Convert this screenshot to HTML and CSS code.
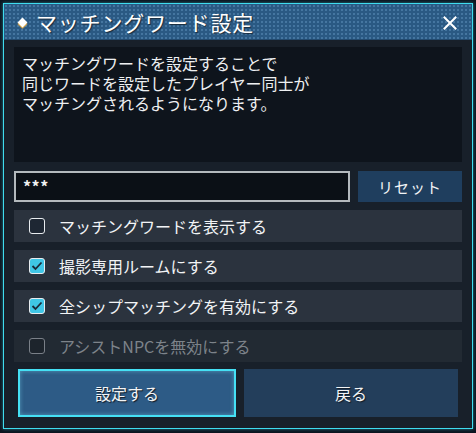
FILE: index.html
```html
<!DOCTYPE html>
<html lang="ja">
<head>
<meta charset="utf-8">
<link rel="stylesheet" href="styles.css">
</head>
<body>
<div class="dialog">
  <div class="titlebar">
    <span class="diamond"></span>
    <span class="title">マッチングワード設定</span>
    <svg class="close" width="14" height="14" viewBox="0 0 14 14"><path d="M1.5 1.5 L12.5 12.5 M12.5 1.5 L1.5 12.5" stroke="#fff" stroke-width="2" stroke-linecap="square"/></svg>
  </div>
  <div class="content">
    <div class="desc">マッチングワードを設定することで<br>同じワードを設定したプレイヤー同士が<br>マッチングされるようになります。</div>
    <div class="inputrow">
      <div class="input">***</div>
      <div class="reset">リセット</div>
    </div>
    <div class="row"><span class="cb"></span><span class="label">マッチングワードを表示する</span></div>
    <div class="row"><span class="cb checked"><svg width="12" height="10" viewBox="0 0 12 10"><path d="M1.5 5 L4.5 8 L10.5 1.5" fill="none" stroke="#1b2a3a" stroke-width="1.8"/></svg></span><span class="label">撮影専用ルームにする</span></div>
    <div class="row"><span class="cb checked"><svg width="12" height="10" viewBox="0 0 12 10"><path d="M1.5 5 L4.5 8 L10.5 1.5" fill="none" stroke="#1b2a3a" stroke-width="1.8"/></svg></span><span class="label">全シップマッチングを有効にする</span></div>
    <div class="row disabled"><span class="cb"></span><span class="label">アシストNPCを無効にする</span></div>
    <div class="buttons">
      <div class="btn primary">設定する</div>
      <div class="btn secondary">戻る</div>
    </div>
  </div>
</div>
</body>
</html>
```
FILE: styles.css
```css
html, body {
  margin: 0;
  padding: 0;
  background: #0c1520;
  font-family: "Noto Sans CJK JP", "Noto Sans", sans-serif;
  color: #f2f4f6;
}
body {
  width: 476px;
  height: 433px;
  overflow: hidden;
}
.dialog {
  margin: 3px;
  width: 468px;
  height: 424px;
  border: 1px solid #3fdcef;
  background: #18202a;
  display: flex;
  flex-direction: column;
  box-shadow: 0 0 3px rgba(63, 220, 239, 0.5);
}
.titlebar {
  height: 36px;
  display: flex;
  align-items: center;
  padding: 0 15px 0 13px;
  background-color: #2a5983;
  background-image: radial-gradient(circle, rgba(120,170,215,0.35) 0.9px, transparent 1.3px);
  background-size: 4px 4px;
  box-shadow: inset 0 -1px 0 #234b70;
}
.diamond {
  width: 7px;
  height: 7px;
  background: #fff;
  transform: rotate(45deg);
  box-shadow: 1px 1px 1px #f0b040;
  margin: 0 10px 0 2px;
}
.title {
  font-size: 21px;
  letter-spacing: 0.8px;
  color: #fff;
  text-shadow: 1px 1px 1px #1a2a3a;
  flex: 1;
  line-height: 36px;
}
.close {
  margin-top: 1px;
}
.content {
  flex: 1;
  padding: 7px 10px 10px 10px;
  display: flex;
  flex-direction: column;
}
.desc {
  height: 115px;
  background: #0e141c;
  box-sizing: border-box;
  padding: 6px 8px;
  font-size: 16px;
  line-height: 20px;
  color: #eef0f2;
}
.inputrow {
  display: flex;
  gap: 8px;
  margin-top: 9px;
  height: 31px;
}
.input {
  flex: 1;
  box-sizing: border-box;
  border: 2px solid #b3b9bd;
  background: #0b1016;
  font-size: 16px;
  line-height: 27px;
  padding-left: 7px;
  color: #f0f0f0;
  font-weight: bold;
  letter-spacing: 0.5px;
}
.reset {
  width: 104px;
  background: #1f3e5e;
  font-size: 15px;
  line-height: 31px;
  text-align: center;
  letter-spacing: 1px;
}
.row {
  margin-top: 8px;
  height: 32px;
  background: #2b333e;
  display: flex;
  align-items: center;
  padding-left: 15px;
}
.row.disabled {
  background: #222a33;
  color: #7d838a;
}
.cb {
  width: 16px;
  height: 16px;
  box-sizing: border-box;
  border: 1.5px solid #e8ecef;
  border-radius: 3px;
  background: #1e2733;
  display: flex;
  align-items: center;
  justify-content: center;
  margin-right: 14px;
}
.cb.checked {
  background: #3fc6e6;
}
.row.disabled .cb {
  border-color: #7a8088;
  background: #1d242c;
}
.label {
  font-size: 16px;
  letter-spacing: 0px;
}
.buttons {
  margin-top: 7px;
  padding: 0 4px;
  display: flex;
  gap: 8px;
  height: 48px;
}
.btn {
  flex: 1;
  display: flex;
  align-items: center;
  justify-content: center;
  font-size: 16px;
  text-shadow: 1px 1px 1px #111a24;
  box-sizing: border-box;
}
.primary {
  background: #2d5b86;
  border: 2px solid #45e0f4;
  box-shadow: inset 0 0 4px rgba(120, 220, 240, 0.5);
}
.secondary {
  background: #233e5b;
}
```
